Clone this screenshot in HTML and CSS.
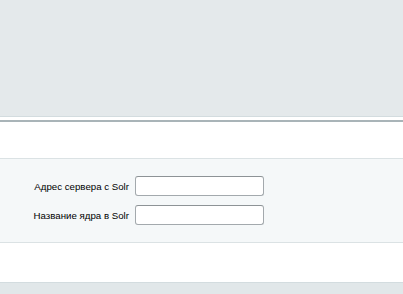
FILE: index.html
```html
<!DOCTYPE html>
<html lang="ru">
<head>
  <meta charset="UTF-8" />
  <title>Настройки Solr</title>
  <link rel="stylesheet" href="styles.css">
</head>
<body>
  <div class="top-area"></div>

  <div class="edit-form">
    <div class="form-head"></div>

    <div class="form-section">
      <div class="field-row">
        <label class="field-label" for="solrServer">Адрес сервера с Solr</label>
        <input type="text" id="solrServer" class="field-input" />
      </div>
      <div class="field-row">
        <label class="field-label" for="solrCore">Название ядра в Solr</label>
        <input type="text" id="solrCore" class="field-input" />
      </div>
    </div>

    <div class="form-foot"></div>
  </div>

  <div class="bottom-area"></div>
</body>
</html>
```

FILE: styles.css
```css
* {
  box-sizing: border-box;
  padding: 0;
  margin: 0;
}

body {
  font-family: "Liberation Sans", Arial, sans-serif;
  font-size: 9.7px;
  color: #000;
  background-color: #e4e9eb;
  height: 294px;
  overflow: hidden;
}

.top-area {
  height: 117px;
  background-color: #e4e9eb;
  border-bottom: 1px solid #d3dcdf;
}

.edit-form {
  background-color: #fff;
  border-top: 3px solid #fff;
}

.form-head {
  height: 38px;
  border-top: 2px solid #a9b4b8;
}

.form-section {
  background-color: #f5f8f9;
  border-top: 1px solid #dbe2e4;
  border-bottom: 1px solid #dbe2e4;
  padding: 17px 0 17px;
}

.field-row {
  display: flex;
  align-items: center;
  margin-bottom: 9px;
}

.field-row:last-child {
  margin-bottom: 0;
}

.field-label {
  width: 129px;
  text-align: right;
  margin-right: 6px;
  padding-top: 1px;
}

.field-input {
  width: 129px;
  height: 20px;
  border: 1px solid #a3a9ad;
  border-top-color: #8d9396;
  border-radius: 3px;
  background-color: #fff;
  font-family: "Liberation Sans", Arial, sans-serif;
  font-size: 11px;
  padding: 0 4px;
}

.form-foot {
  height: 39px;
  background-color: #fff;
}

.bottom-area {
  height: 20px;
  background-color: #e1e7e9;
  border-top: 1px solid #d3dcdf;
}
```
